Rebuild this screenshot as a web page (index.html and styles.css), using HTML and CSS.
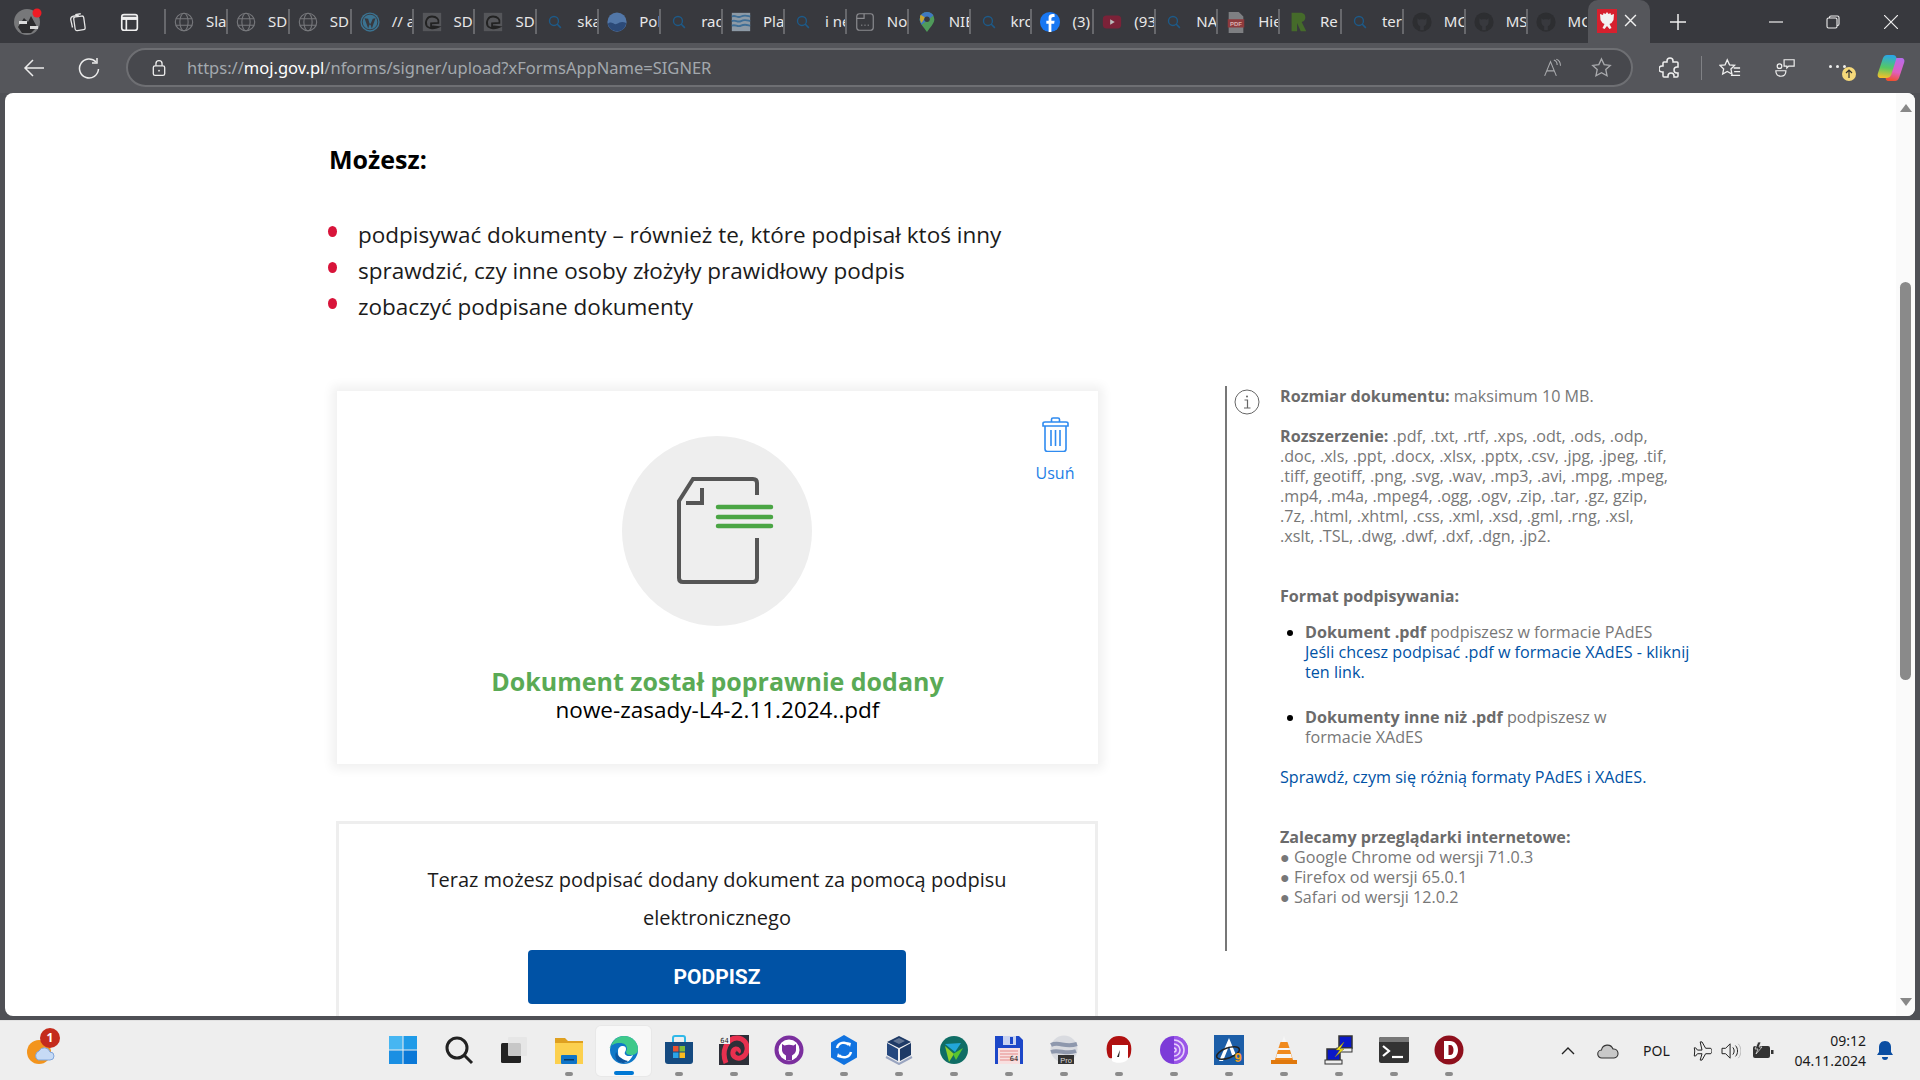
FILE: index.html
```html
<!DOCTYPE html>
<html lang="pl">
<head>
<meta charset="utf-8">
<title>Podpis zaufany</title>
<link rel="stylesheet" href="styles.css">
</head>
<body>
<svg class="defs" aria-hidden="true">
  <symbol id="globe" viewBox="0 0 24 24"><g fill="none" stroke="#77787c" stroke-width="1.2"><circle cx="12" cy="12" r="9.5"/><ellipse cx="12" cy="12" rx="4.5" ry="9.5"/><path d="M3 8.5h18M3 15.5h18"/></g></symbol>
  <symbol id="chip" viewBox="0 0 24 24"><rect x="2" y="2" width="20" height="20" fill="#55565a"/><path d="M6 16c-2-5 1-10 6-10s8 3 7 7l-8 .5v3l8 1c-4 2-11 2-13-1.500z" fill="none" stroke="#222" stroke-width="2"/></symbol>
  <symbol id="srch" viewBox="-4 -4 32 32"><circle cx="10.500" cy="10.500" r="6.500" fill="none" stroke="#1d5a88" stroke-width="2"/><path d="M15 15l5.500 5.500" stroke="#1d5a88" stroke-width="2.200"/></symbol>
  <symbol id="gh" viewBox="0 0 24 24"><circle cx="12" cy="12" r="10.500" fill="#2d2e31"/><path d="M7 8l2 1.500c2-.5 4-.5 6 0L17 8v4c0 3-2 4-3 4.500V21h-4v-4.500C9 16 7 15 7 12z" fill="#38393e"/></symbol>
  <symbol id="pill" viewBox="0 0 8 4"><rect width="8" height="4" rx="2" fill="#8b8b8b"/></symbol>
</svg>

<div class="tabbar">
  <div class="profile">
    <svg class="i26" viewBox="0 0 30 30"><circle cx="14" cy="15" r="13" fill="#77787a"/><path d="M5 20l6-9 4 4 3-6 6 11-6 6H9z" fill="#2c2c2e"/><path d="M6 14h8v3H6zM17 19h8v3h-8z" fill="#d9d9d9"/><circle cx="24" cy="6" r="4.500" fill="#ee1c25"/></svg>
  </div>
  <div class="sysbtn w52"><svg class="i22" viewBox="0 0 24 24" fill="none" stroke="#e6e6e6" stroke-width="1.400"><rect x="8" y="6" width="11" height="15" rx="2" transform="rotate(-8 13 13)"/><path d="M6 18l-2-9c0-2 1-3 3-3.500l6-1M9 4l6-1"/></svg></div>
  <div class="sysbtn w60"><svg class="i22" viewBox="0 0 24 24" fill="none" stroke="#f0f0f0" stroke-width="1.800"><rect x="3" y="4" width="17" height="17" rx="2.500"/><path d="M3 8h17" stroke-width="3.500"/><path d="M8 8v13"/></svg></div>

  <div class="tabs">
    <div class="tab"><svg class="ti"><use href="#globe"/></svg><span>Sla</span></div>
    <div class="tab"><svg class="ti"><use href="#globe"/></svg><span>SD</span></div>
    <div class="tab"><svg class="ti"><use href="#globe"/></svg><span>SD</span></div>
    <div class="tab"><svg class="ti" viewBox="0 0 24 24"><circle cx="12" cy="12" r="10.500" fill="#3b7391"/><circle cx="12" cy="12" r="8.500" fill="none" stroke="#38393e" stroke-width="1"/><path d="M6 8l4 11 2-6 2 6 4-11-3 .5-3 7-2-7z" fill="#38393e"/></svg><span>// a</span></div>
    <div class="tab"><svg class="ti"><use href="#chip"/></svg><span>SD</span></div>
    <div class="tab"><svg class="ti"><use href="#chip"/></svg><span>SD</span></div>
    <div class="tab"><svg class="ti"><use href="#srch"/></svg><span>ska</span></div>
    <div class="tab"><svg class="ti" viewBox="0 0 24 24"><circle cx="12" cy="12" r="10.500" fill="#5277a8"/><path d="M2 14c4-4 7 2 10 0s6-3 10-1c-1 6-5 9-10 9S3 19 2 14z" fill="#2c4a78"/></svg><span>Pol</span></div>
    <div class="tab"><svg class="ti"><use href="#srch"/></svg><span>rad</span></div>
    <div class="tab"><svg class="ti" viewBox="0 0 24 24"><rect x="2" y="2" width="20" height="20" fill="#8d9aa6"/><path d="M2 6c4-2 6 2 10 0s6-1 10 0M2 11c4-2 6 2 10 0s6-1 10 0M2 16c4-2 6 2 10 0s6-1 10 0" fill="none" stroke="#3e6e96" stroke-width="2"/></svg><span>Pla</span></div>
    <div class="tab"><svg class="ti"><use href="#srch"/></svg><span>i ne</span></div>
    <div class="tab"><svg class="ti" viewBox="0 0 24 24" fill="none" stroke="#8b8c90" stroke-width="1.300"><rect x="3" y="3" width="18" height="18" rx="3"/><path d="M3 8h8v-5"/><path d="M8 15.500h1M11.500 15.500h1M15 15.500h1" stroke-width="1.600"/></svg><span>No</span></div>
    <div class="tab"><svg class="ti" viewBox="0 0 24 24"><path d="M12 1a8 8 0 0 0-8 8c0 5 5 9 8 14 3-5 8-9 8-14a8 8 0 0 0-8-8z" fill="#4f9a5a"/><path d="M12 1a8 8 0 0 1 7 4L6 15c-1-2-2-4-2-6a8 8 0 0 1 8-8z" fill="#3f78c0"/><path d="M5 4l5 3-4 6c-2-3-2-6-1-9z" fill="#c8a52c"/><circle cx="12" cy="9" r="3" fill="#38393e"/></svg><span>NIE</span></div>
    <div class="tab"><svg class="ti"><use href="#srch"/></svg><span>kro</span></div>
    <div class="tab"><svg class="ti" viewBox="0 0 24 24"><circle cx="12" cy="12" r="11" fill="#1877f2"/><path d="M13.500 23v-9h3l.5-3.500h-3.500V8.500c0-1 .5-2 2-2H17v-3c-3-.5-6.500 0-6.500 4v3H8V14h2.500v9z" fill="#fff"/></svg><span>(3)</span></div>
    <div class="tab"><svg class="ti" viewBox="0 0 24 24"><rect x="2" y="5" width="20" height="14" rx="4" fill="#7b2238"/><path d="M10 9l5 3-5 3z" fill="#bbb"/></svg><span>(93</span></div>
    <div class="tab"><svg class="ti"><use href="#srch"/></svg><span>NA</span></div>
    <div class="tab"><svg class="ti" viewBox="0 0 24 24"><path d="M4 1h11l5 5v18H4z" fill="#7e7f82"/><rect x="3" y="9" width="18" height="9" fill="#8e3a3c"/><text x="12" y="16" font-size="6.500" font-weight="700" text-anchor="middle" fill="#d9b0b0" font-family="Liberation Sans">PDF</text></svg><span>Hie</span></div>
    <div class="tab"><svg class="ti" viewBox="0 0 24 24"><path d="M5 2h9c5 0 6 3 6 5s-1 4-4 5l5 10h-6l-4-9H11v9H5z" fill="#456b2a"/></svg><span>Re</span></div>
    <div class="tab"><svg class="ti"><use href="#srch"/></svg><span>ter</span></div>
    <div class="tab"><svg class="ti"><use href="#gh"/></svg><span>MC</span></div>
    <div class="tab"><svg class="ti"><use href="#gh"/></svg><span>MS</span></div>
    <div class="tab"><svg class="ti"><use href="#gh"/></svg><span>MC</span></div>
  </div>

  <div class="tab-active">
    <svg class="flag" viewBox="0 0 20 24"><rect width="20" height="24" fill="#d6202e"/><path d="M10 3l1.500 2 2-1 .5 2 3-1-.5 6-2 3-2 1 2 4-2 1-2.500-3-2.500 3-2-1 2-4-2-1-2-3L3 5l3 1 .5-2 2 1z" fill="#f2f2f2"/></svg>
    <svg class="closex" viewBox="0 0 12 12"><path d="M1 1l10 10M11 1L1 11" stroke="#f0f0f0" stroke-width="1.300"/></svg>
  </div>
  <div class="newtab"><svg class="i18" viewBox="0 0 18 18"><path d="M9 1v16M1 9h16" stroke="#eee" stroke-width="1.500"/></svg></div>
  <div class="winctrls">
    <div class="wc"><svg class="i14" viewBox="0 0 14 14"><path d="M0 7h14" stroke="#eee" stroke-width="1.200"/></svg></div>
    <div class="wc"><svg class="i14" viewBox="0 0 14 14" fill="none" stroke="#eee" stroke-width="1.100"><rect x="1" y="3" width="10" height="10" rx="1.500"/><path d="M3.500 3V2.300C3.500 1.500 4 1 5 1h6.500C12.500 1 13 1.500 13 2.500V9c0 1-.5 1.500-1.500 1.500H11"/></svg></div>
    <div class="wc"><svg class="i14" viewBox="0 0 14 14"><path d="M0 0l14 14M14 0L0 14" stroke="#eee" stroke-width="1.200"/></svg></div>
  </div>
</div>

<div class="toolbar">
  <div class="navbtn n1"><svg class="i22" viewBox="0 0 22 22" fill="none" stroke="#ececec" stroke-width="1.500"><path d="M21 11H2M10 3l-8 8 8 8"/></svg></div>
  <div class="navbtn n2"><svg class="i22" viewBox="0 0 22 22" fill="none" stroke="#ececec" stroke-width="1.500"><path d="M18 5a9.500 9.500 0 1 0 2.500 7"/><path d="M19 1v5h-5"/></svg></div>
  <div class="addr">
    <svg class="lock" viewBox="0 0 16 20" fill="none" stroke="#ececec" stroke-width="1.500"><rect x="1.500" y="7.500" width="13" height="11" rx="2"/><path d="M4.500 7.500V5a3.500 3.500 0 0 1 7 0v2.500"/><circle cx="8" cy="13" r="1" fill="#ececec" stroke="none"/></svg>
    <div class="url">https://<b>moj.gov.pl</b>/nforms/signer/upload?xFormsAppName=SIGNER</div>
    <svg class="read" viewBox="0 0 24 22" fill="none" stroke="#a9aaad" stroke-width="1.300"><path d="M2 21L9 4l7 17M4.500 15h9"/><path d="M13 2c3 1 4 3 4 6M16 1c3 1 5 4 5 8"/></svg>
    <svg class="star" viewBox="0 0 22 22" fill="none" stroke="#a9aaad" stroke-width="1.400"><path d="M11 2l2.800 6 6.400.8-4.700 4.400 1.300 6.500L11 16.500l-5.800 3.200 1.300-6.500L1.800 8.800 8.200 8z"/></svg>
  </div>
  <div class="tools">
    <svg class="i22 ext" viewBox="0 0 22 22" fill="none" stroke="#efefef" stroke-width="1.500"><path d="M8 5V4a3 3 0 0 1 6 0v1h4a1 1 0 0 1 1 1v4h-1a3 3 0 0 0 0 6h1v3a1 1 0 0 1-1 1h-3v-1a3 3 0 0 0-6 0v1H5a1 1 0 0 1-1-1v-4H3a3 3 0 0 1 0-6h1V6a1 1 0 0 1 1-1z"/></svg>
    <div class="tsep"></div>
    <svg class="i22 fav" viewBox="0 0 24 22" fill="none" stroke="#efefef" stroke-width="1.400"><path d="M9 2l2.500 5.500 5.500.6-4 3.900 1.100 5.500L9 14.800l-5 2.700 1.100-5.500-4-3.900 5.500-.6zM16 11h7M16.500 15h6.500M13 19h10"/></svg>
    <svg class="i22 coll" viewBox="0 0 24 24" fill="none" stroke="#efefef" stroke-width="1.300"><circle cx="6" cy="10" r="2.500"/><path d="M2 15h11c0 4-2 6-5.500 6S2 19 2 15z"/><path d="M11 3h11v7h-6l-2 2v-2h-3z"/></svg>
    <div class="more"><span class="dot"></span><span class="dot"></span><span class="dot"></span><span class="upd"><svg class="i10" viewBox="0 0 10 10"><path d="M5 9V1M2 4l3-3 3 3" fill="none" stroke="#333" stroke-width="1.200"/></svg></span></div>
    <svg class="i28 cop" viewBox="0 0 28 28"><defs><linearGradient id="cg1" x1="0.500" y1="0" x2="0.400" y2="1"><stop offset="0" stop-color="#2aa6e8"/><stop offset=".55" stop-color="#55c864"/><stop offset="1" stop-color="#f5c02a"/></linearGradient><linearGradient id="cg2" x1="0.600" y1="0" x2="0.400" y2="1"><stop offset="0" stop-color="#b86be8"/><stop offset=".6" stop-color="#e05fc0"/><stop offset="1" stop-color="#f0502f"/></linearGradient></defs><path d="M18 4h6c3 0 4 2 3 5l-5 15c-1 2-2 3-4 3h-6c-3 0-4-2-3-5l5-15c1-2 2-3 4-3z" fill="url(#cg2)"/><path d="M10 1h6c2 0 3 1 3.500 3l-5 16c-1 3-3 4-5 4H4c-3 0-4-2-3-5l5-15C7 2 8 1 10 1z" fill="url(#cg1)"/></svg>
  </div>
</div>

<div class="viewport">
  <main class="page">
    <h1 class="heading">Możesz:</h1>
    <ul class="can">
      <li>podpisywać dokumenty – również te, które podpisał ktoś inny</li>
      <li>sprawdzić, czy inne osoby złożyły prawidłowy podpis</li>
      <li>zobaczyć podpisane dokumenty</li>
    </ul>
    <div class="row">
      <div class="left">
        <section class="card">
          <div class="trash">
            <svg class="trash-i" viewBox="0 0 27 35" fill="none" stroke="#2f8bf0" stroke-width="1.600"><path d="M1 9V6.500C1 5.500 2 5 3 5h21c1 0 2 .5 2 1.500V9zM9.500 5V2.500C9.500 1.500 10 1 11 1h5c1 0 1.500.5 1.500 1.500V5M3 9v23c0 1.500 1 2.500 2.500 2.500h16c1.500 0 2.500-1 2.500-2.500V9M9 13v16M13.500 13v16M18 13v16"/></svg>
            <span>Usuń</span>
          </div>
          <div class="circle">
            <svg class="doc" viewBox="0 0 190 190" fill="none" stroke="#555" stroke-width="4"><path d="M135 59V47q0-4-4-4H71L57 65v77q0 4 4 4h70q4 0 4-4v-40"/><path d="M80 52v15H64"/><path d="M96 71h53M96 81h53M96 90h53" stroke="#4aa544" stroke-width="4.500" stroke-linecap="round"/></svg>
          </div>
          <div class="ok">Dokument został poprawnie dodany</div>
          <div class="fname">nowe-zasady-L4-2.11.2024..pdf</div>
        </section>
        <section class="sign">
          <p>Teraz możesz podpisać dodany dokument za pomocą podpisu elektronicznego</p>
          <button class="btn">PODPISZ</button>
        </section>
      </div>
      <aside class="info">
        <svg class="info-i" viewBox="0 0 26 26" fill="none" stroke="#666"><circle cx="13" cy="13" r="12" stroke-width="1"/><path d="M10.500 11h3v8M10 19h6.500" stroke-width="1.200"/><circle cx="13" cy="7.500" r="1" fill="#666" stroke="none"/></svg>
        <div class="info-text">
          <p><b>Rozmiar dokumentu:</b> maksimum 10 MB.</p>
          <p class="m20"><b>Rozszerzenie:</b> .pdf, .txt, .rtf, .xps, .odt, .ods, .odp,<br>.doc, .xls, .ppt, .docx, .xlsx, .pptx, .csv, .jpg, .jpeg, .tif,<br>.tiff, geotiff, .png, .svg, .wav, .mp3, .avi, .mpg, .mpeg,<br>.mp4, .m4a, .mpeg4, .ogg, .ogv, .zip, .tar, .gz, gzip,<br>.7z, .html, .xhtml, .css, .xml, .xsd, .gml, .rng, .xsl,<br>.xslt, .TSL, .dwg, .dwf, .dxf, .dgn, .jp2.</p>
          <p class="m40"><b>Format podpisywania:</b></p>
          <ul class="fmt">
            <li><b>Dokument .pdf</b> podpiszesz w formacie PAdES<br><a href="#">Jeśli chcesz podpisać .pdf w formacie XAdES - kliknij<br>ten link.</a></li>
            <li><b>Dokumenty inne niż .pdf</b> podpiszesz w<br>formacie XAdES</li>
          </ul>
          <p class="m20"><a href="#">Sprawdź, czym się różnią formaty PAdES i XAdES.</a></p>
          <p class="m40"><b>Zalecamy przeglądarki internetowe:</b><br>● Google Chrome od wersji 71.0.3<br>● Firefox od wersji 65.0.1<br>● Safari od wersji 12.0.2</p>
        </div>
      </aside>
    </div>
  </main>
  <div class="scroll">
    <div class="arrow up"></div>
    <div class="thumb"></div>
    <div class="arrow down"></div>
  </div>
</div>

<footer class="taskbar">
  <div class="weather">
    <svg class="i30" viewBox="0 0 30 30"><circle cx="13" cy="16" r="12" fill="#f3941c"/><path d="M12 24a5 5 0 0 1 1-9 6 6 0 0 1 11 1 4 4 0 0 1 0 8z" fill="#c6daf5" stroke="#7fa6dc"/></svg>
    <span class="wbadge">1</span>
  </div>
  <div class="apps">
    <div class="app app-first"><svg class="i30" viewBox="0 0 30 30"><path d="M1 1h13.500v13.500H1z" fill="#46b6f2"/><path d="M15.500 1H29v13.500H15.500z" fill="#1f9be8"/><path d="M1 15.500h13.500V29H1z" fill="#1a8fe3"/><path d="M15.500 15.500H29V29H15.500z" fill="#0a78d7"/></svg></div>
    <div class="app"><svg class="i30" viewBox="0 0 30 30" fill="none" stroke="#222" stroke-width="3"><circle cx="13" cy="13" r="10"/><path d="M20 20l8 8"/></svg></div>
    <div class="app app-view"><svg class="i30" viewBox="0 0 30 30"><rect x="2" y="8" width="20" height="20" rx="1.500" fill="#222"/><rect x="9" y="2" width="19" height="19" rx="1" fill="#e4e4e4" fill-opacity=".85"/></svg></div>
    <div class="app"><svg class="i30" viewBox="0 0 30 30"><path d="M1 3h10l3 3h15v4H1z" fill="#dfa020"/><path d="M1 8h28v21H1z" fill="#fcd04e"/><rect x="7" y="20" width="16" height="9" rx="1" fill="#0f74c8"/><rect x="10" y="24" width="10" height="1.500" fill="#083a66"/></svg><svg class="pill"><use href="#pill"/></svg></div>
    <div class="app app-on"><svg class="i30" viewBox="0 0 30 30"><circle cx="15" cy="15" r="14" fill="#0f78c8"/><path d="M1.500 13C3 5 9 1 15 1c8 0 14 6 14 13 0 4-3 6-7 6-3 0-5-1-5-3 0-1 1-2 1-3 0-4-3-6-7-6-5 0-9 2-10.500 5z" fill="#3ec98a"/><path d="M9 16c0-3 2-5 5-5s4 3 2 6c-1 2 1 4 4 4 2 0 3-.5 4-1-2 5-6 8-10 8-2 0-5-2-5-12z" fill="#fff"/><path d="M13 28c-5-1-8-5-6-11 2 3 4 7 12 9-2 2-4 2-6 2z" fill="#0b559f"/></svg><span class="edge-bar"></span></div>
    <div class="app"><svg class="i30" viewBox="0 0 30 30"><path d="M1 7h28v19a3 3 0 0 1-3 3H4a3 3 0 0 1-3-3z" fill="#154a80"/><path d="M9 7V3a2 2 0 0 1 2-2h8a2 2 0 0 1 2 2v4" fill="none" stroke="#2fb8e8" stroke-width="2"/><rect x="9" y="11" width="5.500" height="5.500" fill="#e8512f"/><rect x="15.500" y="11" width="5.500" height="5.500" fill="#7fba3a"/><rect x="9" y="17.500" width="5.500" height="5.500" fill="#2aa4e8"/><rect x="15.500" y="17.500" width="5.500" height="5.500" fill="#fbbb20"/></svg><svg class="pill"><use href="#pill"/></svg></div>
    <div class="app"><svg class="i30" viewBox="0 0 30 30"><rect width="30" height="30" fill="#2d2f38"/><path d="M7 28C2 16 8 3 18 3c7 0 11 6 10 12-1 7-8 10-12 7-3-2-3-7 1-8 2 0 3 2 2 3" fill="none" stroke="#e8304f" stroke-width="5"/><rect x="0" y="0" width="11" height="9" fill="#eee"/><text x="5.500" y="7.500" font-size="7" text-anchor="middle" font-family="DejaVu Sans Mono" fill="#222">64</text></svg><svg class="pill"><use href="#pill"/></svg></div>
    <div class="app"><svg class="i30" viewBox="0 0 30 30"><circle cx="15" cy="15" r="12.500" fill="#fff" stroke="#7b2f9e" stroke-width="4"/><path d="M8 9l2.500 1.500c3-1 6-1 9 0L22 9v6c0 3-3 5-4 5.500V25h-6v-4.500c-1-.5-4-2.500-4-5.500z" fill="#7b2f9e"/></svg><svg class="pill"><use href="#pill"/></svg></div>
    <div class="app"><svg class="i30" viewBox="0 0 30 30"><path d="M15 0l13 7.500v15L15 30 2 22.500v-15z" fill="#1173e0"/><path d="M8 13a7 7 0 0 1 12-3M22 17a7 7 0 0 1-12 3" fill="none" stroke="#fff" stroke-width="2.500"/><path d="M18 7l4 1-1 4zM12 23l-4-1 1-4z" fill="#fff"/></svg><svg class="pill"><use href="#pill"/></svg></div>
    <div class="app"><svg class="i30" viewBox="0 0 30 30"><path d="M15 1l12 6-12 6L3 7z" fill="#1e3a66"/><path d="M3 8l11 6v12L3 20z" fill="#25487e"/><path d="M27 8l-11 6v12l11-6z" fill="#1e3a66"/><path d="M9 6l6-3 6 3-6 3z" fill="#fff" opacity=".3"/><path d="M2 22l13 7 13-7" fill="none" stroke="#9aa5c0" stroke-width="2"/></svg><svg class="pill"><use href="#pill"/></svg></div>
    <div class="app"><svg class="i30" viewBox="0 0 30 30"><ellipse cx="15" cy="15" rx="14" ry="14" fill="#0f6d65"/><path d="M6 9l16-1-6 9z" fill="#22a6d8"/><path d="M6 11l9 8-5 8z" fill="#8fd02a"/><path d="M14 19l10-6-7 12z" fill="#57c42f"/></svg><svg class="pill"><use href="#pill"/></svg></div>
    <div class="app"><svg class="i30" viewBox="0 0 30 30"><path d="M1 1h24l4 4v24H1z" fill="#1c47c8"/><rect x="9" y="1" width="13" height="9" fill="#c9d3f0"/><rect x="16" y="2" width="3" height="7" fill="#1c47c8"/><rect x="4" y="13" width="22" height="16" fill="#f8e0e0"/><path d="M6 16h18M6 19h18M6 22h10M6 25h18" stroke="#e58a8a"/><text x="20" y="26" font-size="7" text-anchor="middle" font-family="DejaVu Sans Mono" fill="#222">64</text></svg><svg class="pill"><use href="#pill"/></svg></div>
    <div class="app"><svg class="i30" viewBox="0 0 30 30"><circle cx="15" cy="14" r="13.500" fill="#d9dbe0"/><path d="M2 10c8-4 14 3 26-1M2 17c8-3 15 3 25-1" fill="none" stroke="#8e98ad" stroke-width="4"/><rect x="9" y="20" width="16" height="9" fill="#333"/><text x="17" y="27.500" font-size="7.500" text-anchor="middle" font-family="Liberation Sans" fill="#ddd">Pro</text></svg><svg class="pill"><use href="#pill"/></svg></div>
    <div class="app"><svg class="i30" viewBox="0 0 30 30"><path d="M3 18C1 7 7 1 15 1s14 6 12 17c-1 5-3 6-5 5V10H8v13c-2 1-4 0-5-5z" fill="#b01010"/><path d="M8 10h16v14c-2 4-12 5-16 2z" fill="#fff"/><path d="M13 22l3-7-1 7z" fill="#222"/></svg><svg class="pill"><use href="#pill"/></svg></div>
    <div class="app"><svg class="i30" viewBox="0 0 30 30"><circle cx="15" cy="15" r="14" fill="#7c3bd8"/><path d="M15 1a14 14 0 0 1 0 28z" fill="#9a55e8"/><path d="M15 5a10 10 0 0 1 0 20M15 9a6 6 0 0 1 0 12M15 13a2 2 0 0 1 0 4" fill="none" stroke="#e6d2fa" stroke-width="1.600"/></svg><svg class="pill"><use href="#pill"/></svg></div>
    <div class="app"><svg class="i30" viewBox="0 0 30 30"><rect width="30" height="30" fill="#1c5ea8"/><path d="M15 3L5 26h4l6-15 3 9h4z" fill="#fff"/><ellipse cx="14" cy="18" rx="12" ry="5" fill="none" stroke="#222" stroke-width="1.500" transform="rotate(-20 14 18)"/><text x="24" y="27" font-size="13" font-weight="700" text-anchor="middle" font-family="Liberation Sans" fill="#f5a020">9</text></svg><svg class="pill"><use href="#pill"/></svg></div>
    <div class="app"><svg class="i30" viewBox="0 0 30 30"><path d="M15 1l5 14H10z" fill="#f6f6f6"/><path d="M11.500 7h7l2 6h-11z" fill="#f08a1e"/><path d="M9 15h12l3 10H6z" fill="#f08a1e"/><path d="M8 19h14l1 4H7z" fill="#f6f6f6"/><path d="M2 25h26v4H2z" fill="#e0780c"/></svg><svg class="pill"><use href="#pill"/></svg></div>
    <div class="app"><svg class="i30" viewBox="0 0 30 30"><rect x="15" y="1" width="13" height="12" fill="#0a18c8" stroke="#333" stroke-width="1.500"/><rect x="13" y="13" width="15" height="4" fill="#eee" stroke="#333"/><rect x="3" y="14" width="13" height="12" fill="#0a18c8" stroke="#333" stroke-width="1.500"/><rect x="1" y="25" width="17" height="4" fill="#eee" stroke="#333"/><path d="M20 7l-8 8h4l-5 7 9-8h-4z" fill="#f6e71c" stroke="#8a7a10" stroke-width=".5"/></svg><svg class="pill"><use href="#pill"/></svg></div>
    <div class="app"><svg class="i30" viewBox="0 0 30 30"><rect y="2" width="30" height="26" rx="2" fill="#333"/><path d="M0 4a2 2 0 0 1 2-2h28v5H0z" fill="#777"/><path d="M4 11l6 5-6 5" fill="none" stroke="#fff" stroke-width="2.200"/><path d="M13 22h11" stroke="#fff" stroke-width="2.200"/></svg><svg class="pill"><use href="#pill"/></svg></div>
    <div class="app"><svg class="i30" viewBox="0 0 30 30"><circle cx="15" cy="15" r="14.500" fill="#8e0f1c"/><path d="M10 6h6c5 0 8 4 8 9s-3 9-8 9h-6zM14.500 10v10h1.500c2.500 0 3.500-2 3.500-5s-1-5-3.500-5z" fill="#fff" fill-rule="evenodd"/></svg><svg class="pill"><use href="#pill"/></svg></div>
  </div>
  <div class="tray">
    <svg class="i14 t-chev" viewBox="0 0 14 14"><path d="M1 10l6-6 6 6" fill="none" stroke="#222" stroke-width="1.400"/></svg>
    <svg class="t-cloud" viewBox="0 0 22 16"><path d="M5 15a4 4 0 0 1-.5-8 6 6 0 0 1 11.500-1 4.500 4.500 0 0 1 1 9z" fill="#c8c8c8" stroke="#333" stroke-width="1.100"/></svg>
    <span class="t-lang">POL</span>
    <svg class="t-plane" viewBox="0 0 22 22" fill="none" stroke="#222" stroke-width="1.100"><path d="M9 1h2l4 7h5c1.500 0 2 1.500 2 3s-.5 3-2 3h-5l-4 7H9l2-7H6l-2 2.500H2.500L3 11l-.5-3.500H4L6 10h5z"/></svg>
    <svg class="t-vol" viewBox="0 0 22 20" fill="none" stroke="#222" stroke-width="1.100"><path d="M1 7h4l5-5v16l-5-5H1z"/><path d="M13 6c2 2 2 6 0 8M16 4c3 3 3 9 0 12"/><path d="M19 2c4 4 4 12 0 16" stroke="#bbb"/></svg>
    <svg class="t-bat" viewBox="0 0 22 18"><rect x="1" y="4" width="17" height="12" rx="2" fill="#333"/><rect x="19" y="8" width="2.500" height="4" fill="#333"/><path d="M6 0l-3 7h3l-2 5 6-7H7l2-5z" fill="#333" stroke="#eee" stroke-width=".7"/></svg>
    <div class="clock"><div>09:12</div><div>04.11.2024</div></div>
    <svg class="t-bell" viewBox="0 0 18 20"><path d="M9 0c4 0 6 3 6 6v5l2 3H1l2-3V6c0-3 2-6 6-6z" fill="#0b4ea2"/><path d="M6 16h6a3 3 0 0 1-6 0z" fill="#0b4ea2"/></svg>
  </div>
</footer>
</body>
</html>
```
FILE: styles.css
```css
* { box-sizing: border-box; }
html, body { margin: 0; height: 100%; overflow: hidden; }
body {
  width: 1920px; height: 1080px; display: flex; flex-direction: column;
  background: #4f5055; font-family: "Open Sans", "Noto Sans", sans-serif;
}
.defs { width: 0; height: 0; position: absolute; }
.i10 { width: 10px; height: 10px; }
.i14 { width: 14px; height: 14px; flex: none; }
.i18 { width: 18px; height: 18px; }
.i22 { width: 22px; height: 22px; flex: none; }
.i26 { width: 30px; height: 30px; }
.i28 { width: 28px; height: 28px; flex: none; }
.i30 { width: 30px; height: 30px; display: block; flex: none; }

/* tab strip */
.tabbar { height: 43px; background: #38393e; display: flex; align-items: center; flex: none; }
.profile { width: 52px; padding-left: 13px; display: flex; flex: none; }
.sysbtn { display: flex; justify-content: center; flex: none; }
.w52 { width: 52px; }
.w60 { width: 60px; padding-right: 8px; }
.tabs { display: flex; width: 1424px; flex: none; }
.tab {
  width: 61.9px; height: 25px; display: flex; align-items: center; flex: none;
  border-left: 2px solid #67686c; overflow: hidden; padding-left: 7px;
  color: #e8e8e8; font: 15px/25px "Noto Sans", sans-serif;
}
.tab span { margin-left: 11px; white-space: nowrap; }
.ti { width: 22px; height: 22px; flex: none; }
.tab-active {
  width: 62px; height: 43px; background: #55565b; border-radius: 10px 10px 0 0;
  display: flex; align-items: center; padding-left: 9px; padding-bottom: 2px; flex: none;
}
.flag { width: 20px; height: 24px; }
.closex { width: 13px; height: 13px; margin-left: 7px; }
.newtab { width: 58px; padding-left: 19px; display: flex; flex: none; }
.winctrls { display: flex; margin-left: 39px; flex: none; }
.wc { width: 57.5px; display: flex; justify-content: center; }

/* toolbar */
.toolbar { height: 50px; background: #55565b; display: flex; align-items: center; flex: none; padding-bottom: 1px; }
.navbtn { display: flex; justify-content: center; flex: none; }
.n1 { width: 68px; }
.n2 { width: 42px; }
.addr {
  width: 1507px; height: 39px; margin-left: 16px; border: 2px solid #6e6f73; border-radius: 20px;
  background: #47484d; display: flex; align-items: center; padding-left: 24px; flex: none;
}
.lock { width: 14px; height: 18px; flex: none; }
.url { margin-left: 21px; width: 1356px; flex: none; color: #a3a8ad; font: 16.5px/24px "Noto Sans", sans-serif; white-space: nowrap; }
.url b { color: #fff; font-weight: 400; }
.read { width: 20px; height: 19px; flex: none; }
.star { width: 21px; height: 21px; margin-left: 28px; flex: none; }
.tools { display: flex; align-items: center; flex: none; }
.ext { margin-left: 26px; }
.tsep { width: 1px; height: 24px; background: #808185; margin-left: 20px; }
.fav { margin-left: 17px; }
.coll { margin-left: 33px; }
.more { width: 34px; margin-left: 32px; position: relative; height: 24px; display: flex; gap: 4px; align-items: center; padding: 0 0 2px 1px; }
.dot { width: 3px; height: 3px; border-radius: 50%; background: #eee; }
.upd {
  position: absolute; left: 14px; top: 11px; width: 14px; height: 14px; border-radius: 50%;
  background: #f6d97a; display: flex; align-items: center; justify-content: center;
}
.cop { margin-left: 15px; }

/* web page area */
.viewport {
  height: 923px; margin: 0 5px; background: #fff; border-radius: 8px;
  display: flex; overflow: hidden; flex: none;
}
.page { width: 1891px; padding: 50px 0 0 324px; overflow: hidden; flex: none; }
.heading { margin: 0; font-size: 25px; line-height: 33px; font-weight: 700; color: #000; }
.can { margin: 41px 0 0; padding: 0 0 0 29px; list-style: none; color: #1b1b1b; font-size: 22.5px; line-height: 36px; }
.can li { position: relative; white-space: nowrap; }
.can li::before {
  content: ""; position: absolute; left: -30px; top: 9px; width: 9px; height: 11px;
  border-radius: 50%; background: #d8143a;
}
.row { display: flex; margin-top: 61px; }
.left { width: 896px; padding: 5px 0 0 8px; flex: none; }
.card {
  position: relative; width: 761px; height: 373px; background: #fff; padding-top: 45px;
  box-shadow: 0 0 10px 5px #f0f0f0; display: flex; flex-direction: column; align-items: center;
}
.trash { position: absolute; left: 693px; top: 26px; width: 50px; display: flex; flex-direction: column; align-items: center; color: #1f7fe6; font-size: 16px; line-height: 22px; }
.trash-i { width: 27px; height: 35px; margin-bottom: 10px; }
.circle { width: 190px; height: 190px; border-radius: 50%; background: #eee; flex: none; margin-right: 2px; }
.doc { width: 190px; height: 190px; display: block; }
.ok { margin-top: 41px; color: #5aaa55; font-size: 25px; line-height: 28px; font-weight: 700; }
.fname { margin-top: 1px; color: #000; font-size: 22.5px; line-height: 28px; }
.sign {
  margin: 57px 0 0 -1px; width: 762px; height: 300px; border: 3px solid #eee; padding-top: 37px;
  display: flex; flex-direction: column; align-items: center;
}
.sign p { margin: 0; width: 640px; text-align: center; color: #1b1b1b; font-size: 20px; line-height: 38px; }
.btn {
  margin-top: 13px; width: 378px; height: 54px; border: 0; border-radius: 4px; background: #0052a5;
  color: #fff; font: 700 21px "Roboto", "Liberation Sans", sans-serif;
}
.info { display: flex; height: 565px; border-left: 2px solid #777; align-items: flex-start; }
.info-i { width: 26px; height: 26px; margin: 3px 0 0 7px; flex: none; }
.info-text { margin-left: 20px; width: 440px; color: #777; font-size: 16.15px; line-height: 20px; white-space: nowrap; }
.info-text p { margin: 0; }
.info-text b { color: #6b6b6b; font-weight: 700; }
.info-text a { color: #0052a5; text-decoration: none; }
.info-text .m20 { margin-top: 20px; }
.info-text .m40 { margin-top: 40px; }
.fmt { margin: 16px 0 0; padding-left: 25px; }
.fmt li::marker { color: #000; }
.fmt li + li { margin-top: 25px; }

/* scrollbar */
.scroll { width: 19px; background: #fafafa; display: flex; flex-direction: column; align-items: center; padding: 11px 0 0; flex: none; }
.arrow { width: 0; height: 0; border-left: 6px solid transparent; border-right: 6px solid transparent; flex: none; }
.up { border-bottom: 8px solid #888; }
.down { border-top: 8px solid #888; margin-top: 318px; }
.thumb { width: 11px; height: 398px; margin-top: 170px; border-radius: 6px; background: #8a8a8a; flex: none; }

/* taskbar */
.taskbar { height: 60px; margin-top: 4px; background: #eee; display: flex; align-items: center; flex: none; border-top: 1px solid #e2e2e2; }
.weather { width: 374px; padding-left: 26px; position: relative; flex: none; }
.wbadge {
  position: absolute; left: 40px; top: -8px; width: 20px; height: 20px; border-radius: 50%; background: #c42b1c;
  color: #fff; font: 700 12px/20px "Noto Sans", sans-serif; text-align: center;
}
.apps { display: flex; flex: none; }
.app { width: 55px; height: 50px; display: flex; flex-direction: column; align-items: center; padding-top: 9px; position: relative; flex: none; }
.app-first { width: 57px; }
.app-view { width: 55px; }
.pill { width: 8px; height: 4px; position: absolute; left: 23.500px; top: 46px; }
.app-on { background: #f8f8f8; border-radius: 5px; box-shadow: 0 0 0 1px #e8e8e8; }
.edge-bar { position: absolute; left: 17.500px; top: 45px; width: 20px; height: 4px; border-radius: 2px; background: #0078d4; }
.tray { display: flex; align-items: center; flex: none; margin-left: 85px; color: #1a1a1a; font: 14px "Noto Sans", sans-serif; }
.t-cloud { width: 22px; height: 16px; margin-left: 22px; flex: none; }
.t-lang { margin-left: 24px; width: 49px; flex: none; }
.t-plane { width: 20px; height: 20px; flex: none; }
.t-vol { width: 20px; height: 18px; margin-left: 9px; flex: none; }
.t-bat { width: 22px; height: 18px; margin-left: 11px; flex: none; }
.clock { width: 92px; text-align: right; line-height: 20px; flex: none; }
.t-bell { width: 18px; height: 20px; margin-left: 10px; flex: none; }
```
